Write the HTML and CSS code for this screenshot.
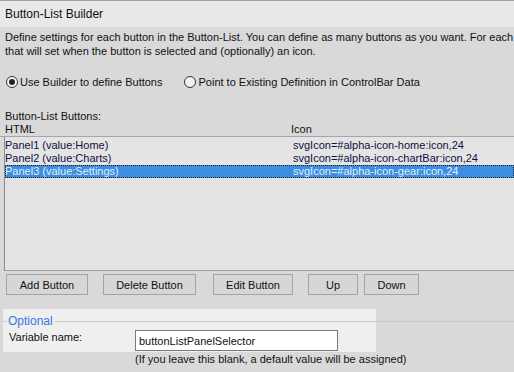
FILE: index.html
```html
<!DOCTYPE html>
<html>
<head>
    <meta charset="UTF-8">
    <title>Button-List Builder</title>
    <link rel="stylesheet" href="styles.css">
</head>
<body>
    <div class="panel">
        <div class="title">Button-List Builder</div>

        <div class="body">
            <p class="desc">
                Define settings for each button in the Button-List. You can define as many buttons as you want. For each<br>
                that will set when the button is selected and (optionally) an icon.
            </p>

            <div class="radios">
                <label class="radio"><span class="dot checked"></span>Use Builder to define Buttons</label>
                <label class="radio"><span class="dot"></span>Point to Existing Definition in ControlBar Data</label>
            </div>

            <div class="list-label">Button-List Buttons:</div>

            <div class="list-head">
                <span class="col-html">HTML</span>
                <span class="col-icon">Icon</span>
            </div>

            <div class="list">
                <div class="row">
                    <span class="col-html">Panel1 (value:Home)</span>
                    <span class="col-icon">svgIcon=#alpha-icon-home:icon,24</span>
                </div>
                <div class="row">
                    <span class="col-html">Panel2 (value:Charts)</span>
                    <span class="col-icon">svgIcon=#alpha-icon-chartBar:icon,24</span>
                </div>
                <div class="row selected">
                    <span class="col-html">Panel3 (value:Settings)</span>
                    <span class="col-icon">svgIcon=#alpha-icon-gear:icon,24</span>
                </div>
            </div>

            <div class="buttons">
                <button class="btn-add">Add Button</button>
                <button class="btn-delete">Delete Button</button>
                <button class="btn-edit">Edit Button</button>
                <button class="btn-up">Up</button>
                <button class="btn-down">Down</button>
            </div>
        </div>

        <div class="optional">
            <div class="legend">Optional</div>
            <div class="var-row">
                <span class="var-label">Variable name:</span>
                <input class="var-input" type="text" value="buttonListPanelSelector">
            </div>
        </div>
        <div class="note">(If you leave this blank, a default value will be assigned)</div>
    </div>
</body>
</html>
```

FILE: styles.css
```css
html, body {
    margin: 0;
    padding: 0;
    overflow: hidden;
    background-color: #d9d9d9;
}

.panel {
    width: 514px;
    height: 372px;
    border-top: 1px solid #a0a0a0;
    font-family: "Liberation Sans", Arial, sans-serif;
    font-size: 11px;
    color: #111;
    box-sizing: border-box;
}

.title {
    height: 26px;
    line-height: 26px;
    padding-left: 5px;
    background-color: #e8e8e8;
    font-size: 12px;
}

.body {
    padding-top: 3px;
}

.desc {
    margin: 0;
    padding-left: 5px;
    line-height: 14px;
    white-space: nowrap;
}

.radios {
    display: flex;
    margin-top: 17px;
    height: 14px;
    padding-left: 6px;
}

.radio {
    display: flex;
    align-items: center;
    gap: 2px;
    line-height: 14px;
}

.radio + .radio {
    margin-left: 22px;
}

.dot {
    width: 10px;
    height: 10px;
    border: 1px solid #333;
    border-radius: 50%;
    background-color: #f4f4f4;
    display: flex;
    align-items: center;
    justify-content: center;
}

.dot.checked::after {
    content: "";
    width: 6px;
    height: 6px;
    border-radius: 50%;
    background-color: #222;
}

.list-label {
    margin-top: 20px;
    padding-left: 5px;
    line-height: 14px;
}

.list-head {
    display: flex;
    height: 13px;
    line-height: 13px;
    border-bottom: 1px solid #a6a6a6;
}

.col-html {
    width: 286px;
    padding-left: 5px;
}

.list-head .col-icon {
    padding-left: 0;
}

.col-icon {
    padding-left: 7px;
}

.list {
    height: 134px;
    margin-left: 4px;
    padding-top: 2px;
    background-color: #e4e4e4;
    border-left: 1px solid #8c8c8c;
    border-bottom: 1px solid #a0a0a0;
    box-sizing: border-box;
}

.row {
    display: flex;
    height: 13px;
    line-height: 13px;
    color: #101040;
}

.row .col-html {
    width: 281px;
    padding-left: 0;
}

.row.selected {
    background-color: #3d8ee0;
    color: #e2eefb;
    outline: 1px dotted #222;
    outline-offset: -1px;
}

.buttons {
    display: flex;
    gap: 15px;
    margin-top: 3px;
    padding-left: 6px;
}

.buttons button {
    height: 21px;
    padding: 0;
    font-family: "Liberation Sans", Arial, sans-serif;
    font-size: 11px;
    color: #111;
    background-color: #d6d6d6;
    border: 1px solid #a4a4a4;
    border-radius: 0;
}

.btn-add { width: 82px; }
.btn-delete { width: 93px; margin-left: 0; }
.btn-edit { width: 80px; margin-left: 2px; }
.btn-up { width: 50px; }
.btn-down { width: 55px; margin-left: -9px; }

.optional {
    margin-top: 14px;
    padding: 6px 0 1px 3px;
    background: linear-gradient(to right, #d9d9d9 3px, #efefef 3px, #efefef 376px, transparent 376px);
}

.legend {
    display: flex;
    align-items: center;
    height: 12px;
    color: #3b76e0;
    font-size: 12px;
}

.legend::before {
    content: "";
    width: 4px;
    margin-right: 1px;
    border-top: 1px solid #c8c8c8;
}

.legend::after {
    content: "";
    flex: 1;
    margin-left: 2px;
    border-top: 1px solid #c8c8c8;
}

.var-row {
    display: flex;
    align-items: flex-start;
    margin-top: 3px;
}

.var-label {
    width: 126px;
    padding-left: 6px;
    line-height: 14px;
}

.var-input {
    width: 203px;
    height: 21px;
    margin: 0;
    padding: 0 3px;
    box-sizing: border-box;
    border: 1px solid #7a7a7a;
    background-color: #fff;
    font-family: "Liberation Sans", Arial, sans-serif;
    font-size: 11px;
    color: #111;
}

.note {
    padding-left: 135px;
    line-height: 14px;
}
```
